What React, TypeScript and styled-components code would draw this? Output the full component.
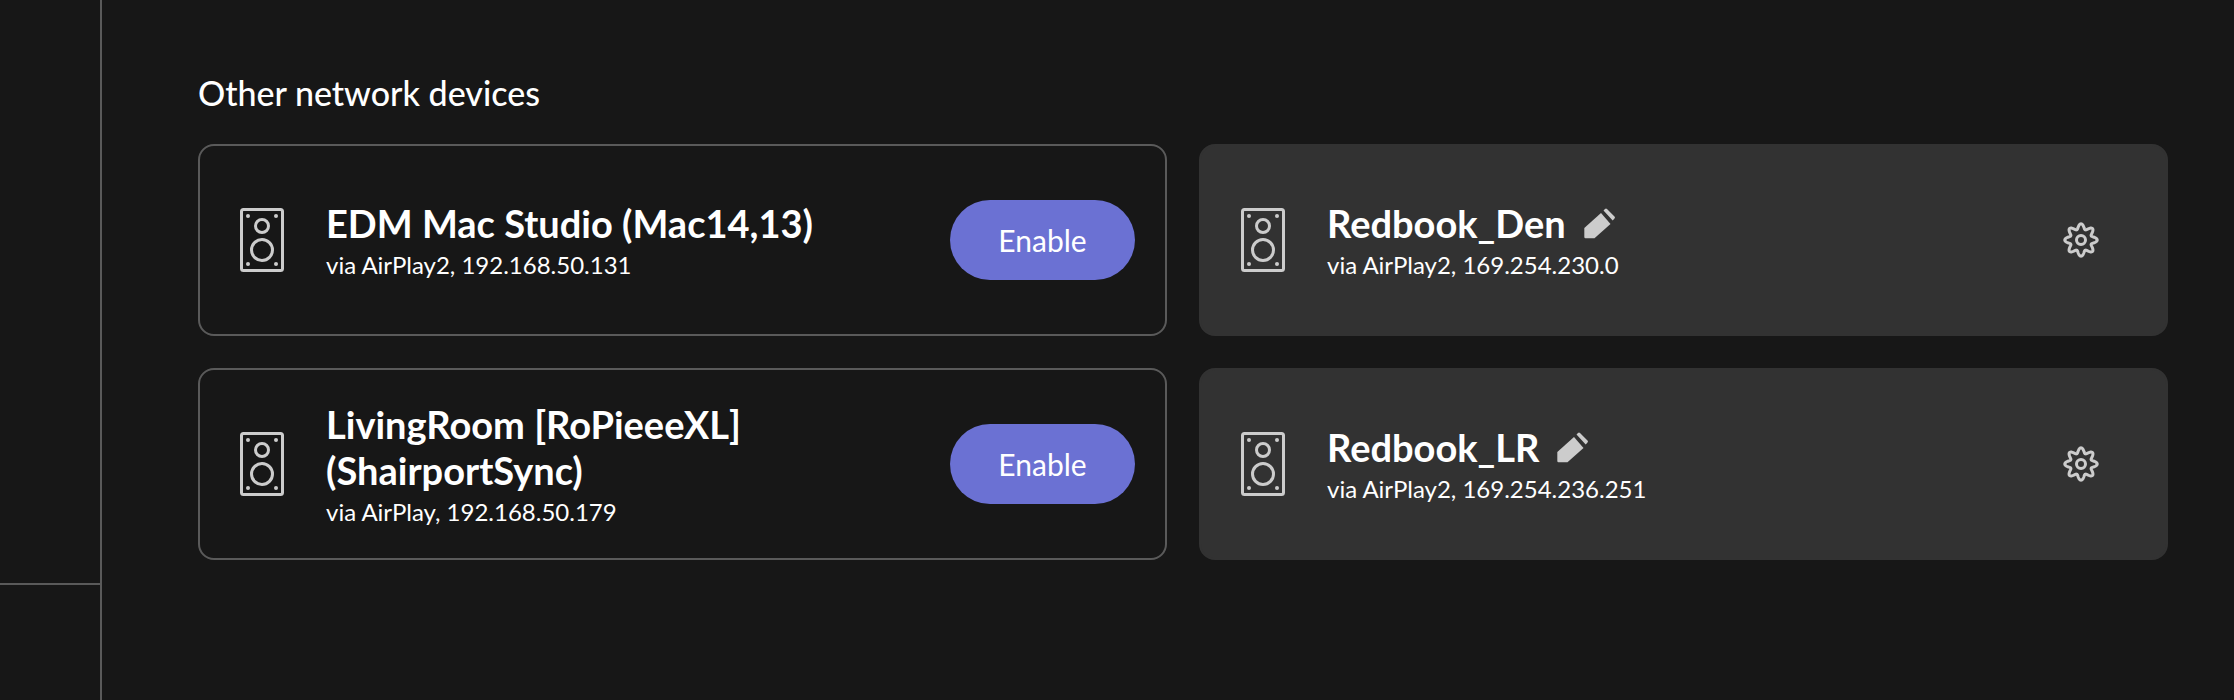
import React from 'react';
import styled, { createGlobalStyle } from 'styled-components';

const GlobalStyle = createGlobalStyle`
  html, body {
    margin: 0;
    padding: 0;
    background: #171717;
  }
  body {
    font-family: Lato, "Open Sans", sans-serif;
    color: #fff;
  }
`;

interface Device {
  name: string;
  via: string;
  enabled: boolean;
}

const devices: Device[] = [
  { name: 'EDM Mac Studio (Mac14,13)', via: 'via AirPlay2, 192.168.50.131', enabled: false },
  { name: 'Redbook_Den', via: 'via AirPlay2, 169.254.230.0', enabled: true },
  { name: 'LivingRoom [RoPieeeXL] (ShairportSync)', via: 'via AirPlay, 192.168.50.179', enabled: false },
  { name: 'Redbook_LR', via: 'via AirPlay2, 169.254.236.251', enabled: true },
];

const gearPath = (() => {
  const pts: string[] = [];
  for (let i = 0; i < 240; i++) {
    const a = (i / 240) * Math.PI * 2;
    const r = 13.6 + 2.6 * Math.cos(8 * a);
    pts.push(`${(18 + r * Math.sin(a)).toFixed(2)},${(18 - r * Math.cos(a)).toFixed(2)}`);
  }
  return `M${pts.join('L')}Z`;
})();

const SpeakerIcon = () => (
  <SpeakerSvg viewBox="0 0 44 64">
    <rect x="1.5" y="1.5" width="41" height="61" rx="2" fill="none" stroke="currentColor" strokeWidth="3" />
    <circle cx="22" cy="18" r="6.5" fill="none" stroke="currentColor" strokeWidth="3" />
    <circle cx="22" cy="42" r="10.5" fill="none" stroke="currentColor" strokeWidth="3" />
    <circle cx="8" cy="8" r="2" fill="currentColor" />
    <circle cx="36" cy="8" r="2" fill="currentColor" />
    <circle cx="8" cy="56" r="2" fill="currentColor" />
    <circle cx="36" cy="56" r="2" fill="currentColor" />
  </SpeakerSvg>
);

const PencilIcon = () => (
  <PencilSvg viewBox="0 0 32 31">
    <path d="M0.3 29V20L17 5L26.5 16L10.5 30.2H1.5Q0.3 30.2 0.3 29Z" fill="currentColor" />
    <path d="M19.5 2.5L21 1Q22 0 23 1L30.5 8.5Q31.5 9.5 30.5 10.5L28.7 12.5Z" fill="currentColor" />
  </PencilSvg>
);

const GearIcon = () => (
  <GearSvg viewBox="0 0 36 36">
    <path d={gearPath} fill="none" stroke="currentColor" strokeWidth="3" strokeLinejoin="round" />
    <circle cx="18" cy="18" r="4.5" fill="none" stroke="currentColor" strokeWidth="3" />
  </GearSvg>
);

export default function App() {
  return (
    <>
      <GlobalStyle />
      <Page>
        <Sidebar>
          <SidebarTop />
        </Sidebar>
        <Main>
          <Heading>Other network devices</Heading>
          <DeviceGrid>
            {devices.map((device) => (
              <DeviceCard key={device.name} $enabled={device.enabled}>
                <SpeakerIcon />
                <DeviceText>
                  <DeviceName>
                    {device.name}
                    {device.enabled && <PencilIcon />}
                  </DeviceName>
                  <DeviceVia>{device.via}</DeviceVia>
                </DeviceText>
                {device.enabled ? (
                  <GearButton>
                    <GearIcon />
                  </GearButton>
                ) : (
                  <EnableButton>Enable</EnableButton>
                )}
              </DeviceCard>
            ))}
          </DeviceGrid>
        </Main>
      </Page>
    </>
  );
}

const Page = styled.div`
  display: flex;
  width: 2234px;
  height: 700px;
  overflow: hidden;
  background: #171717;
`;

const Sidebar = styled.div`
  flex: 0 0 100px;
  height: 100%;
  border-right: 2px solid #5a5a5a;
`;

const SidebarTop = styled.div`
  height: 583px;
  border-bottom: 2px solid #5a5a5a;
`;

const Main = styled.div`
  flex: 1;
  padding: 74px 66px 0 96px;
`;

const Heading = styled.h2`
  margin: 0 0 32px;
  font-size: 34px;
  line-height: 38px;
  font-weight: 500;
  color: #fff;
`;

const DeviceGrid = styled.div`
  display: grid;
  grid-template-columns: 1fr 1fr;
  grid-auto-rows: 192px;
  gap: 32px;
`;

const DeviceCard = styled.div<{ $enabled: boolean }>`
  display: flex;
  align-items: center;
  box-sizing: border-box;
  padding: 0 30px 0 40px;
  border-radius: 16px;
  border: 2px solid ${({ $enabled }) => ($enabled ? '#323232' : '#5a5a5a')};
  background: ${({ $enabled }) => ($enabled ? '#323232' : '#171717')};
  color: #ccc;
`;

const SpeakerSvg = styled.svg`
  flex: none;
  width: 44px;
  height: 64px;
  margin-right: 42px;
`;

const DeviceText = styled.div`
  flex: 1;
  min-width: 0;
  color: #fff;
`;

const DeviceName = styled.div`
  display: flex;
  align-items: center;
  max-width: 500px;
  font-size: 38px;
  line-height: 46px;
  font-weight: 700;
`;

const PencilSvg = styled.svg`
  flex: none;
  width: 32px;
  height: 31px;
  margin-left: 18px;
  color: #ccc;
`;

const DeviceVia = styled.div`
  margin-top: 4px;
  font-size: 24px;
  line-height: 30px;
`;

const EnableButton = styled.button`
  flex: none;
  width: 185px;
  height: 80px;
  border: none;
  border-radius: 40px;
  background: #6b71d3;
  color: #fff;
  font-family: inherit;
  font-size: 30px;
`;

const GearButton = styled.div`
  flex: none;
  display: flex;
  margin-right: 37px;
  color: #ccc;
`;

const GearSvg = styled.svg`
  width: 36px;
  height: 36px;
`;
